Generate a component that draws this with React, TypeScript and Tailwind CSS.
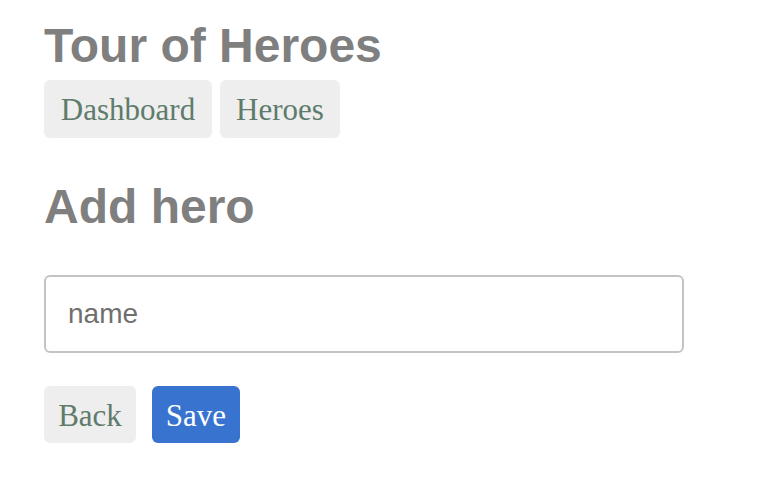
export default function App() {
  return (
    <div className="min-h-[484px] w-full bg-white pl-[44px] pt-[22px]">
      <h1 className="font-['Liberation_Sans',Arial,sans-serif] text-[48px] font-bold leading-[48px] text-[#7f7f7f]">
        Tour of Heroes
      </h1>

      <nav className="mt-[10px] flex gap-[8px]">
        <a className="flex h-[58px] w-[168px] items-center justify-center rounded-[6px] bg-[#eeeeee] pt-[3px] font-['Liberation_Serif',Georgia,serif] text-[31px] text-[#5e7b6b]">
          Dashboard
        </a>
        <a className="flex h-[58px] w-[120px] items-center justify-center rounded-[6px] bg-[#eeeeee] pt-[3px] font-['Liberation_Serif',Georgia,serif] text-[31px] text-[#5e7b6b]">
          Heroes
        </a>
      </nav>

      <h2 className="mt-[45px] font-['Liberation_Sans',Arial,sans-serif] text-[48px] font-bold leading-[48px] text-[#7f7f7f]">
        Add hero
      </h2>

      <input
        type="text"
        placeholder="name"
        className="mt-[44px] block h-[78px] w-[640px] rounded-[6px] border-2 border-[#c4c4c4] pl-[22px] font-['Liberation_Sans',Arial,sans-serif] text-[28px] text-[#333] outline-none placeholder:text-[#6f6f6f]"
      />

      <div className="mt-[33px] flex gap-[16px]">
        <button
          type="button"
          className="flex h-[57px] w-[92px] items-center justify-center rounded-[6px] bg-[#eeeeee] pt-[3px] font-['Liberation_Serif',Georgia,serif] text-[31px] text-[#5e7b6b]"
        >
          Back
        </button>
        <button
          type="button"
          className="flex h-[57px] w-[88px] items-center justify-center rounded-[6px] bg-[#3874cf] pt-[3px] font-['Liberation_Serif',Georgia,serif] text-[31px] text-white"
        >
          Save
        </button>
      </div>
    </div>
  );
}
